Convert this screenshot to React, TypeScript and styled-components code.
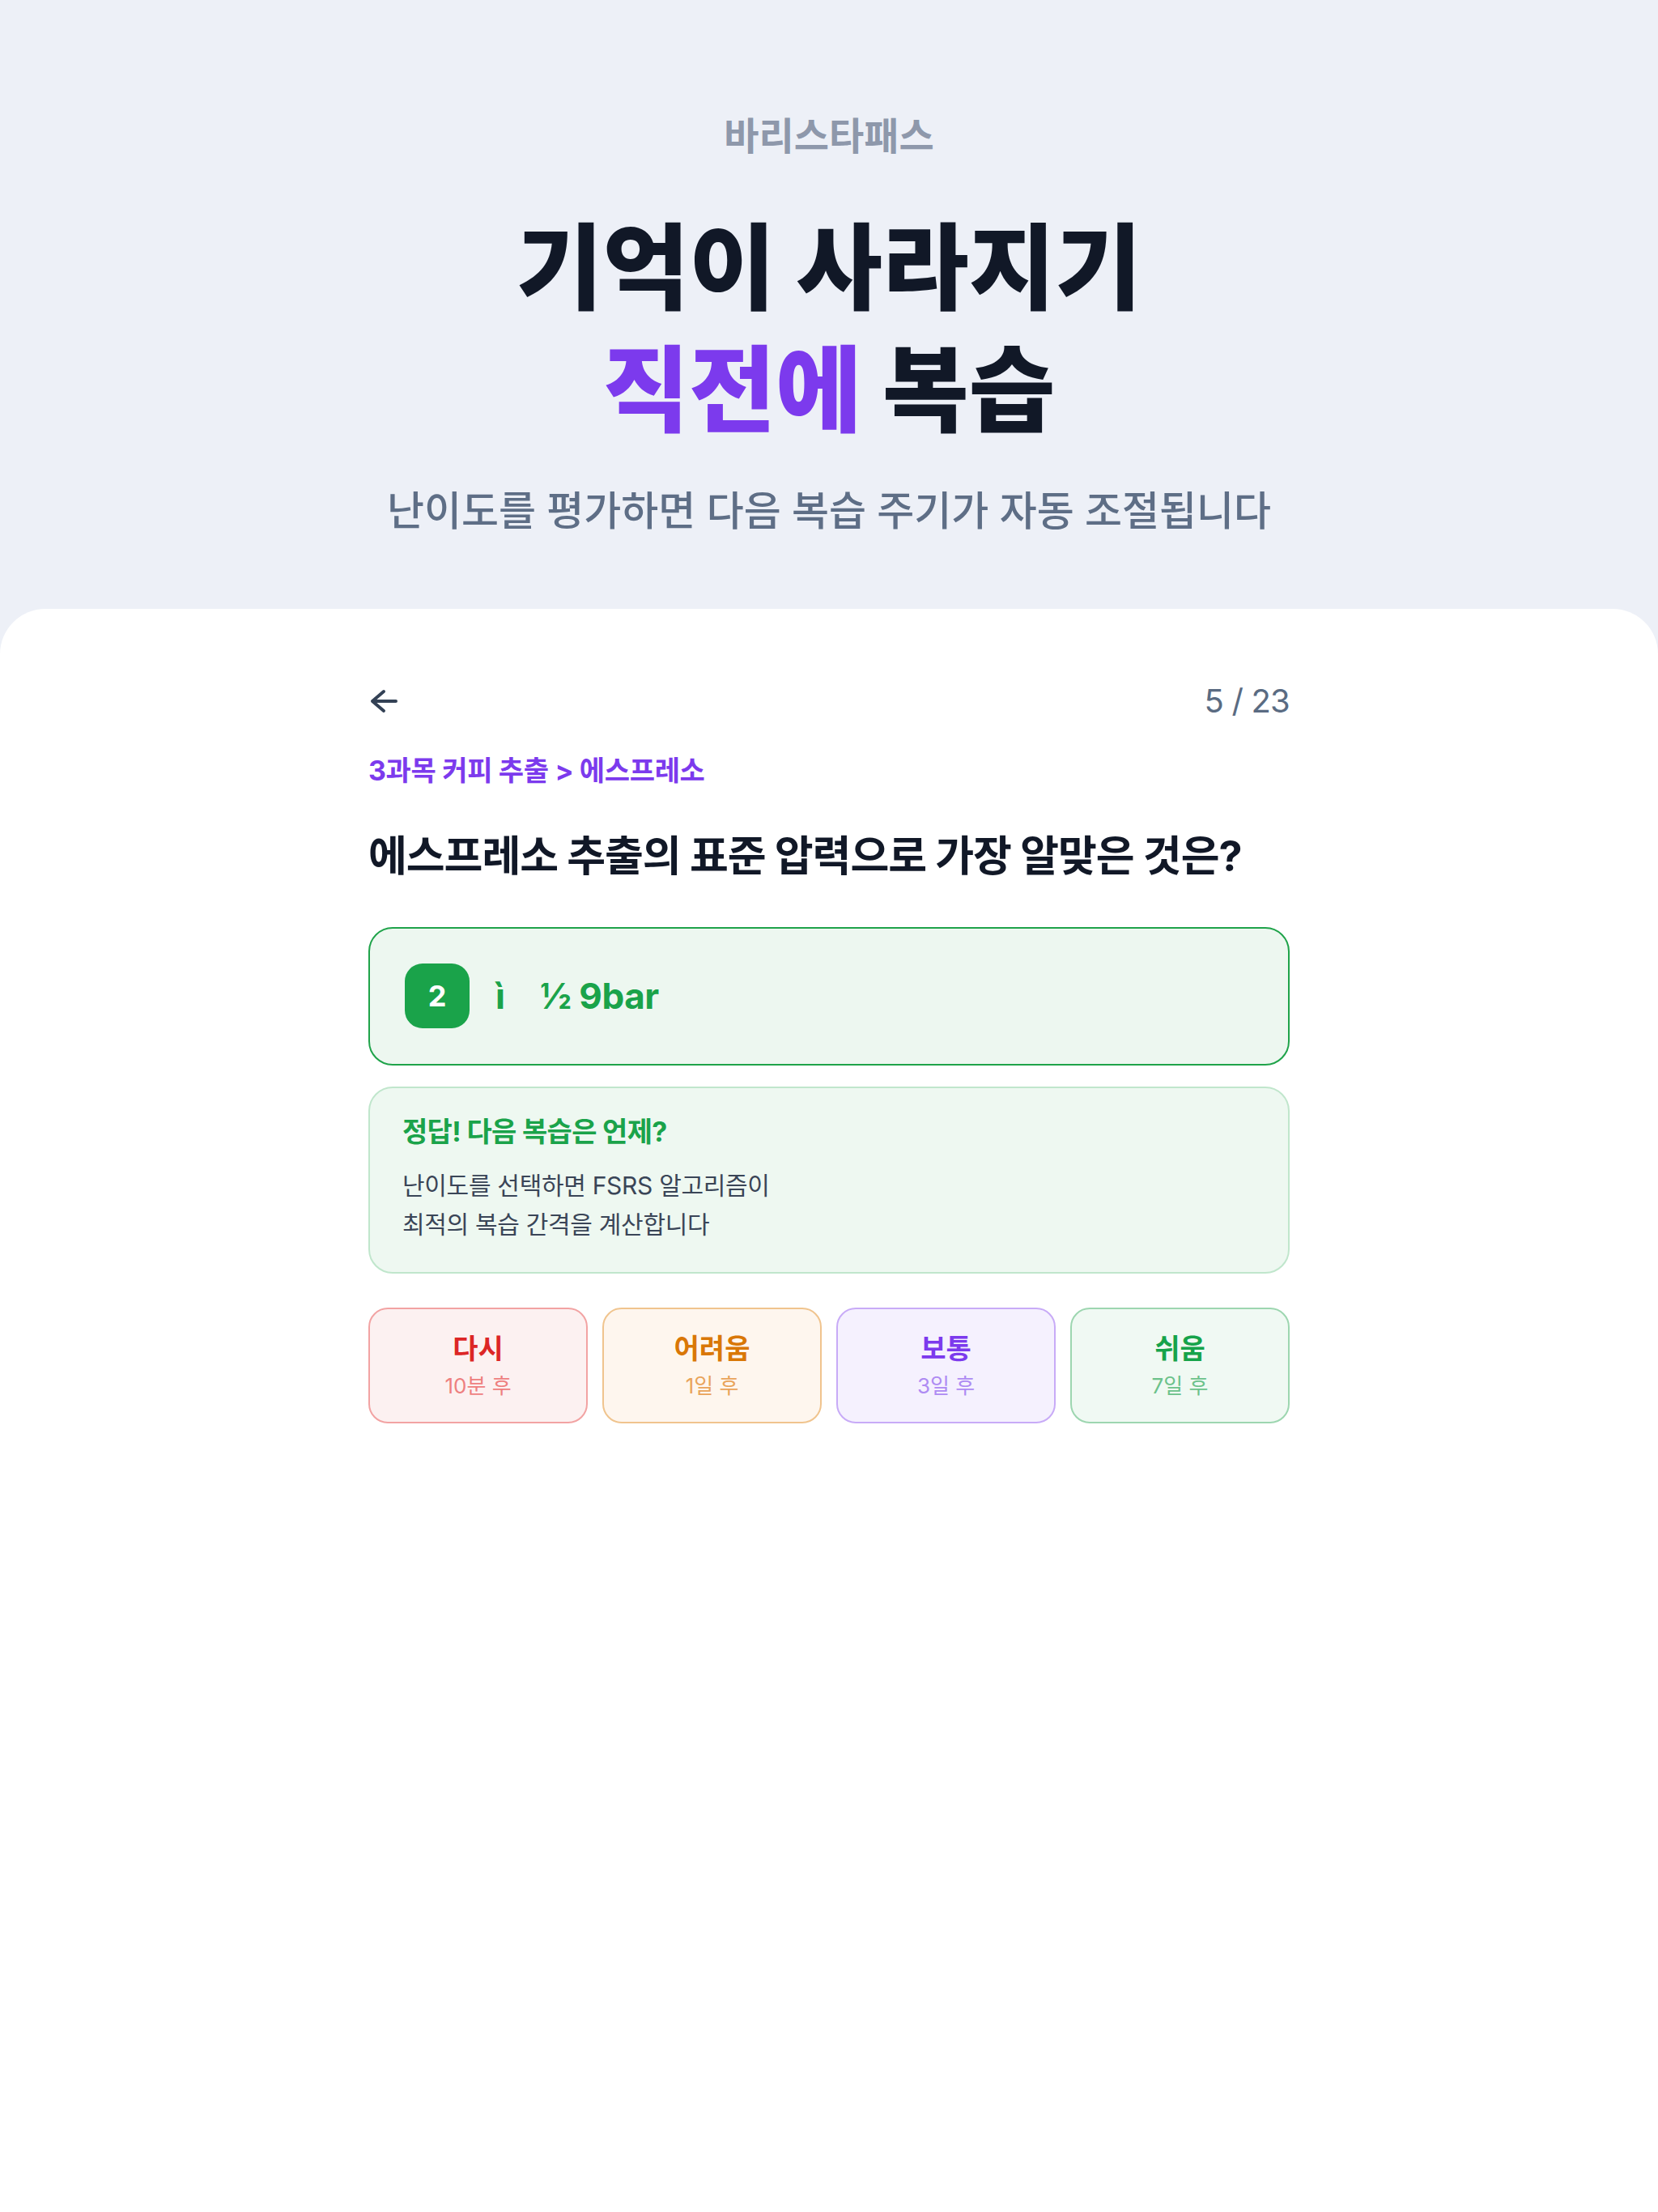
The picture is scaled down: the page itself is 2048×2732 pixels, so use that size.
import styled, { createGlobalStyle } from 'styled-components'

const GlobalStyle = createGlobalStyle`
	* {
		box-sizing: border-box;
	}
	body {
		margin: 0;
		background: #edf0f7;
		font-family: Inter, 'Noto Sans CJK KR', sans-serif;
		-webkit-font-smoothing: antialiased;
	}
`

const Page = styled.div`
	min-height: 2732px;
	display: flex;
	flex-direction: column;
	background: #edf0f7;
`
const Hero = styled.header`
	display: flex;
	flex-direction: column;
	align-items: center;
	padding: 138px 0 91px;
`
const Brand = styled.div`
	font-size: 47px;
	line-height: 60px;
	font-weight: 700;
	color: #8e98ab;
`
const Headline = styled.h1`
	margin: 58px 0 0;
	font-size: 116px;
	line-height: 151px;
	font-weight: 800;
	color: #111827;
	text-align: center;
	letter-spacing: 0;
`
const Accent = styled.span`
	color: #7c3aed;
`
const Lead = styled.p`
	margin: 43px 0 0;
	font-size: 50px;
	line-height: 60px;
	font-weight: 500;
	color: #5e6e86;
`

const Sheet = styled.main`
	flex: 1;
	background: #fff;
	border-radius: 56px 56px 0 0;
	padding: 92px 0 120px;
`
const Column = styled.div`
	width: 1138px;
	margin: 0 auto;
	display: flex;
	flex-direction: column;
`
const TopBar = styled.div`
	display: flex;
	justify-content: space-between;
	align-items: center;
	height: 44px;
`
const BackButton = styled.button`
	border: none;
	background: none;
	padding: 0;
	display: flex;
	align-items: center;
	cursor: pointer;
`
const Counter = styled.div`
	font-size: 40px;
	line-height: 44px;
	color: #5a6b82;
	letter-spacing: -0.02em;
`
const Breadcrumb = styled.div`
	margin-top: 42px;
	font-size: 34px;
	line-height: 44px;
	font-weight: 700;
	color: #7c3aed;
	letter-spacing: -0.01em;
`
const Question = styled.h2`
	margin: 51px 0 0;
	font-size: 52px;
	line-height: 66px;
	font-weight: 700;
	color: #111827;
	letter-spacing: -0.02em;
`
const AnswerCard = styled.div`
	margin-top: 54px;
	display: flex;
	align-items: center;
	gap: 32px;
	padding: 43px 43px 44px;
	border: 2px solid #1fa34a;
	border-radius: 30px;
	background: #edf7f0;
`
const Badge = styled.div`
	width: 80px;
	height: 80px;
	border-radius: 22px;
	background: #1aa34a;
	color: #fff;
	font-size: 36px;
	font-weight: 700;
	display: flex;
	align-items: center;
	justify-content: center;
`
const AnswerText = styled.div`
	font-size: 44px;
	font-weight: 700;
	color: #1aa34a;
	letter-spacing: -0.01em;
`
const Feedback = styled.div`
	margin-top: 26px;
	padding: 30px 40px 35px;
	border: 2px solid #c0e6cc;
	border-radius: 30px;
	background: #eef8f1;
`
const FeedbackTitle = styled.div`
	font-size: 34px;
	line-height: 48px;
	font-weight: 700;
	color: #1aa34a;
	letter-spacing: -0.02em;
`
const FeedbackBody = styled.p`
	margin: 18px 0 0;
	font-size: 30px;
	line-height: 48px;
	color: #3a4557;
	letter-spacing: -0.01em;
`
const Ratings = styled.div`
	margin-top: 42px;
	display: grid;
	grid-template-columns: repeat(4, 1fr);
	gap: 18px;
`
const Rating = styled.button<{ $bg: string; $border: string }>`
	height: 143px;
	display: flex;
	flex-direction: column;
	align-items: center;
	justify-content: center;
	gap: 6px;
	border: 2px solid ${p => p.$border};
	border-radius: 24px;
	background: ${p => p.$bg};
	font-family: inherit;
	cursor: pointer;
`
const RatingLabel = styled.span<{ $color: string }>`
	font-size: 34px;
	line-height: 44px;
	font-weight: 700;
	color: ${p => p.$color};
`
const RatingDelay = styled.span<{ $color: string }>`
	font-size: 26px;
	line-height: 36px;
	color: ${p => p.$color};
`

const ratings = [
	{ label: '다시', delay: '10분 후', color: '#dc2626', sub: '#ee7f7f', bg: '#fcf1f1', border: '#f2a3a3' },
	{ label: '어려움', delay: '1일 후', color: '#d97706', sub: '#e9a45a', bg: '#fef6ee', border: '#f0c48e' },
	{ label: '보통', delay: '3일 후', color: '#7c3aed', sub: '#ae8bf3', bg: '#f5f1fe', border: '#c8abf7' },
	{ label: '쉬움', delay: '7일 후', color: '#16a34a', sub: '#6cc28b', bg: '#f0f9f3', border: '#9dd6b0' },
]

function BackArrow() {
	return (
		<svg width='36' height='30' viewBox='0 0 36 30' fill='none'>
			<path
				d='M19 3 5 15l14 12M5 15h29'
				stroke='#334155'
				strokeWidth='4'
				strokeLinecap='round'
				strokeLinejoin='round'
			/>
		</svg>
	)
}

export default function App() {
	return (
		<Page>
			<GlobalStyle />
			<Hero>
				<Brand>바리스타패스</Brand>
				<Headline>
					기억이 사라지기
					<br />
					<Accent>직전에</Accent> 복습
				</Headline>
				<Lead>난이도를 평가하면 다음 복습 주기가 자동 조절됩니다</Lead>
			</Hero>
			<Sheet>
				<Column>
					<TopBar>
						<BackButton aria-label='뒤로'>
							<BackArrow />
						</BackButton>
						<Counter>5 / 23</Counter>
					</TopBar>
					<Breadcrumb>3과목 커피 추출 &gt; 에스프레소</Breadcrumb>
					<Question>에스프레소 추출의 표준 압력으로 가장 알맞은 것은?</Question>
					<AnswerCard>
						<Badge>2</Badge>
						<AnswerText>ì{'\u2003'}½ 9bar</AnswerText>
					</AnswerCard>
					<Feedback>
						<FeedbackTitle>정답! 다음 복습은 언제?</FeedbackTitle>
						<FeedbackBody>
							난이도를 선택하면 FSRS 알고리즘이
							<br />
							최적의 복습 간격을 계산합니다
						</FeedbackBody>
					</Feedback>
					<Ratings>
						{ratings.map(r => (
							<Rating key={r.label} $bg={r.bg} $border={r.border}>
								<RatingLabel $color={r.color}>{r.label}</RatingLabel>
								<RatingDelay $color={r.sub}>{r.delay}</RatingDelay>
							</Rating>
						))}
					</Ratings>
				</Column>
			</Sheet>
		</Page>
	)
}
